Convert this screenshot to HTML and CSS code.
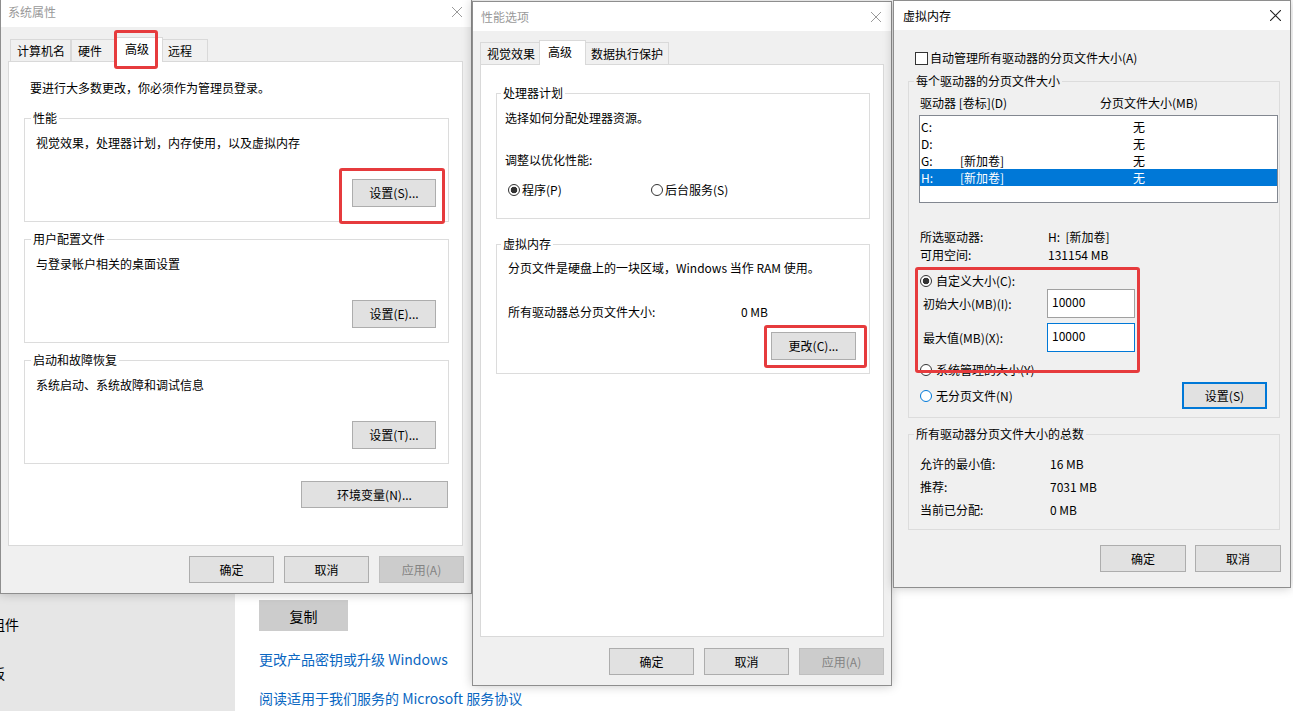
FILE: index.html
```html
<!DOCTYPE html>
<html lang="zh-CN">
<head>
<meta charset="utf-8">
<title>虚拟内存设置</title>
<link rel="stylesheet" href="styles.css">
</head>
<body>
<div class="desktop">
  <aside class="nav">
    <div class="nav-item">组件</div>
    <div class="nav-item">板</div>
  </aside>
  <main class="content">
    <button class="copy-btn">复制</button>
    <a class="link link-a" href="#">更改产品密钥或升级 Windows</a>
    <a class="link link-b" href="#">阅读适用于我们服务的 Microsoft 服务协议</a>
  </main>
</div>

<section class="win win-sys">
  <header class="titlebar">
    <span class="title">系统属性</span>
    <svg class="close" viewBox="0 0 10 10"><path d="M0 0L10 10M10 0L0 10"/></svg>
  </header>
  <div class="win-body">
    <div class="tabs">
      <div class="tab">计算机名</div>
      <div class="tab">硬件</div>
      <div class="tab selected">高级</div>
      <div class="tab">远程</div>
    </div>
    <div class="panel">
      <p class="note">要进行大多数更改，你必须作为管理员登录。</p>
      <fieldset class="group sys-group">
        <legend>性能</legend>
        <p>视觉效果，处理器计划，内存使用，以及虚拟内存</p>
        <div class="actions"><button class="btn btn-set">设置(S)...</button></div>
      </fieldset>
      <fieldset class="group sys-group">
        <legend>用户配置文件</legend>
        <p>与登录帐户相关的桌面设置</p>
        <div class="actions"><button class="btn btn-set">设置(E)...</button></div>
      </fieldset>
      <fieldset class="group sys-group">
        <legend>启动和故障恢复</legend>
        <p>系统启动、系统故障和调试信息</p>
        <div class="actions"><button class="btn btn-set">设置(T)...</button></div>
      </fieldset>
      <div class="actions env-row"><button class="btn btn-env">环境变量(N)...</button></div>
    </div>
    <div class="dialog-buttons">
      <button class="btn">确定</button>
      <button class="btn">取消</button>
      <button class="btn" disabled>应用(A)</button>
    </div>
  </div>
</section>

<section class="win win-perf">
  <header class="titlebar">
    <span class="title">性能选项</span>
    <svg class="close" viewBox="0 0 10 10"><path d="M0 0L10 10M10 0L0 10"/></svg>
  </header>
  <div class="win-body">
    <div class="tabs">
      <div class="tab">视觉效果</div>
      <div class="tab selected">高级</div>
      <div class="tab">数据执行保护</div>
    </div>
    <div class="panel">
      <fieldset class="group perf-g1">
        <legend>处理器计划</legend>
        <p>选择如何分配处理器资源。</p>
        <p class="adjust">调整以优化性能:</p>
        <div class="radio-line">
          <label class="radio-item first"><span class="radio checked"></span>程序(P)</label>
          <label class="radio-item"><span class="radio"></span>后台服务(S)</label>
        </div>
      </fieldset>
      <fieldset class="group perf-g2">
        <legend>虚拟内存</legend>
        <p>分页文件是硬盘上的一块区域，Windows 当作 RAM 使用。</p>
        <div class="kv perf-total"><span class="k">所有驱动器总分页文件大小:</span><span>0 MB</span></div>
        <div class="actions"><button class="btn btn-change">更改(C)...</button></div>
      </fieldset>
    </div>
    <div class="dialog-buttons">
      <button class="btn">确定</button>
      <button class="btn">取消</button>
      <button class="btn" disabled>应用(A)</button>
    </div>
  </div>
</section>

<section class="win win-vm">
  <header class="titlebar">
    <span class="title">虚拟内存</span>
    <svg class="close" viewBox="0 0 10 10"><path d="M0 0L10 10M10 0L0 10"/></svg>
  </header>
  <div class="win-body">
    <label class="check-row"><span class="checkbox"></span>自动管理所有驱动器的分页文件大小(A)</label>
    <fieldset class="group vm-g1">
      <legend>每个驱动器的分页文件大小</legend>
      <div class="cols"><span class="h1">驱动器 [卷标](D)</span><span>分页文件大小(MB)</span></div>
      <div class="drive-list">
        <div class="drive-row"><span class="c1">C:</span><span class="c2"></span><span>无</span></div>
        <div class="drive-row"><span class="c1">D:</span><span class="c2"></span><span>无</span></div>
        <div class="drive-row"><span class="c1">G:</span><span class="c2">[新加卷]</span><span>无</span></div>
        <div class="drive-row selected"><span class="c1">H:</span><span class="c2">[新加卷]</span><span>无</span></div>
      </div>
      <div class="info">
        <div class="kv"><span class="k">所选驱动器:</span><span>H:&nbsp;&nbsp;[新加卷]</span></div>
        <div class="kv"><span class="k">可用空间:</span><span>131154 MB</span></div>
      </div>
      <label class="radio-row custom"><span class="radio checked"></span>自定义大小(C):</label>
      <div class="size-row"><span class="k">初始大小(MB)(I):</span><input class="field" type="text" value="10000"></div>
      <div class="size-row second"><span class="k">最大值(MB)(X):</span><input class="field focused" type="text" value="10000"></div>
      <label class="radio-row managed"><span class="radio"></span>系统管理的大小(Y)</label>
      <div class="last-row">
        <label class="radio-row"><span class="radio hover"></span>无分页文件(N)</label>
        <button class="btn btn-default">设置(S)</button>
      </div>
    </fieldset>
    <fieldset class="group vm-g2">
      <legend>所有驱动器分页文件大小的总数</legend>
      <div class="kv"><span class="k">允许的最小值:</span><span>16 MB</span></div>
      <div class="kv"><span class="k">推荐:</span><span>7031 MB</span></div>
      <div class="kv"><span class="k">当前已分配:</span><span>0 MB</span></div>
    </fieldset>
    <div class="dialog-buttons">
      <button class="btn">确定</button>
      <button class="btn">取消</button>
    </div>
  </div>
</section>

<div class="hl hl-tab"></div>
<div class="hl hl-perf"></div>
<div class="hl hl-change"></div>
<div class="hl hl-custom"></div>
</body>
</html>
```

FILE: styles.css
```css
* { box-sizing: border-box; }
html, body { margin: 0; padding: 0; }
body {
  width: 1293px;
  height: 711px;
  overflow: hidden;
  position: relative;
  background: #fff;
  color: #000;
  font-family: "Noto Sans CJK SC", "Noto Sans", sans-serif;
  font-size: 12px;
  line-height: 16px;
}
p { margin: 0; }
label { display: flex; }

/* background settings page */
.desktop { display: flex; height: 711px; }
.nav {
  width: 235px;
  flex: none;
  background: #e6e6e6;
  padding-top: 614px;
  font-size: 14px;
  line-height: 20px;
}
.nav-item { margin-left: -9px; white-space: nowrap; }
.nav-item + .nav-item { margin-top: 29px; }
.content {
  flex: 1;
  padding: 600px 0 0 24px;
  display: flex;
  flex-direction: column;
  align-items: flex-start;
  font-size: 14px;
  line-height: 20px;
}
.copy-btn {
  width: 89px;
  height: 31px;
  border: 0;
  background: #cccccc;
  font: inherit;
  color: #000;
  padding: 0;
}
.link { color: #0a67c2; text-decoration: none; margin-top: 18px; white-space: nowrap; }
.link-b { margin-top: 19px; }

/* windows */
.win {
  position: absolute;
  display: flex;
  flex-direction: column;
  background: #f0f0f0;
  border: 1px solid #8e8e8e;
  box-shadow: 0 0 10px rgba(0, 0, 0, 0.22);
}
.win-sys { left: 0; top: -4px; width: 472px; height: 598px; }
.win-perf { left: 472px; top: 1px; width: 420px; height: 685px; }
.win-vm { left: 893px; top: 0; width: 398px; height: 588px; z-index: 2; }

.titlebar {
  flex: none;
  height: 29px;
  display: flex;
  align-items: center;
  justify-content: space-between;
  background: #fff;
  padding: 0 10px 0 8px;
}
.win-sys .titlebar { height: 30px; padding: 0 9px 0 7px; }
.win-vm .titlebar { padding: 0 9px 0 9px; }
.title { color: #999; }
.win-vm .title { color: #000; }
.close { width: 10px; height: 10px; stroke: #9a9a9a; stroke-width: 1; fill: none; }
.win-vm .close { stroke: #222; width: 11px; height: 11px; }

.win-body {
  flex: 1;
  min-height: 0;
  display: flex;
  flex-direction: column;
  padding: 0 7px 10px;
}

/* tabs */
.tabs {
  flex: none;
  display: flex;
  align-items: flex-end;
  height: 24px;
  position: relative;
  z-index: 1;
}
.win-sys .tabs { margin: 10px 0 0 2px; }
.win-perf .tabs { margin-top: 9px; }
.tab {
  height: 22px;
  min-width: 47px;
  line-height: 20px;
  padding: 1px 5px 0 6px;
  border: 1px solid #d9d9d9;
  border-bottom: 0;
  background: #f0f0f0;
  white-space: nowrap;
}
.tab.selected {
  height: 25px;
  margin: 0 -2px -1px;
  padding: 1px 7px 0 8px;
  background: #fff;
  position: relative;
  z-index: 1;
}

/* tab panel */
.panel {
  flex: 1;
  display: flex;
  flex-direction: column;
  background: #fff;
  border: 1px solid #d9d9d9;
}
.win-sys .panel { padding: 18px 13px 0 15px; margin-right: 1px; }
.win-perf .panel { padding: 20px 13px 0 15px; }
.note { margin: 0 0 14px 6px; }

/* group boxes */
.group {
  margin: 0;
  min-width: 0;
  border: 1px solid #dcdcdc;
}
.group legend { padding: 0 2px; line-height: 16px; }
.sys-group { padding: 9px 12px 14px 11px; }
.sys-group legend { margin-left: -5px; }
.sys-group + .sys-group { margin-top: 9px; }
.actions { display: flex; justify-content: flex-end; margin-top: 28px; }
.env-row { margin: 17px 1px 0 0; }

.perf-g1 { padding: 9px 13px 20px 8px; }
.perf-g1 legend { margin-left: -4px; }
.adjust { margin-top: 26px; }
.radio-line { display: flex; margin: 14px 0 0 3px; }
.radio-item { align-items: center; gap: 2px; height: 16px; }
.radio-item.first { width: 143px; }
.perf-g2 { margin-top: 17px; padding: 8px 13px 13px 11px; }
.perf-g2 legend { margin-left: -7px; }
.kv { display: flex; white-space: nowrap; }
.perf-total { margin-top: 28px; }
.perf-total .k { width: 233px; }
.perf-g2 .actions { margin-top: 12px; }

/* buttons */
.btn {
  width: 85px;
  height: 27px;
  padding: 0;
  background: #e1e1e1;
  border: 1px solid #adadad;
  font: inherit;
  color: #000;
}
.btn:disabled { background: #cccccc; border-color: #bfbfbf; color: #838383; }
.btn-set { width: 84px; height: 28px; }
.btn-change { height: 28px; }
.btn-env { width: 147px; }
.btn-default { border: 2px solid #0078d7; margin-right: 11px; }

.dialog-buttons {
  flex: none;
  display: flex;
  justify-content: flex-end;
  gap: 10px;
  margin-top: 10px;
}
.win-perf .dialog-buttons { margin-top: 11px; }

/* radio / checkbox / fields */
.radio {
  width: 12px;
  height: 12px;
  flex: none;
  border: 1px solid #333;
  border-radius: 50%;
  background: #fff;
}
.radio.checked { background: radial-gradient(circle, #333 0 3px, #fff 3.6px); }
.radio.hover { border-color: #0078d7; }
.checkbox {
  width: 13px;
  height: 13px;
  flex: none;
  border: 1px solid #333;
  background: #fff;
}

/* virtual memory dialog */
.win-vm .win-body { padding: 0 10px 15px 14px; }
.check-row { align-items: center; gap: 2px; margin: 20px 0 0 7px; height: 16px; }
.vm-g1 { margin-top: 7px; padding: 6px 1px 8px 11px; }
.vm-g1 legend, .vm-g2 legend { margin-left: -6px; }
.cols { display: flex; }
.cols .h1 { width: 180px; }
.drive-list {
  margin: 4px 0 0 -1px;
  height: 88px;
  padding-top: 2px;
  border: 1px solid #828790;
  background: #fff;
}
.drive-row { display: flex; height: 17px; line-height: 17px; }
.drive-row .c1 { width: 40px; padding-left: 1px; }
.drive-row .c2 { width: 173px; }
.drive-row.selected { background: #0078d7; color: #fff; }
.info { margin-top: 25px; line-height: 18px; }
.info .k { width: 128px; }
.radio-row { align-items: center; gap: 4px; height: 16px; white-space: nowrap; }
.radio-row.custom { margin-top: 9px; }
.size-row { display: flex; align-items: center; margin-left: 3px; }
.size-row.second { margin-top: 5px; }
.size-row .k { width: 124px; }
.field {
  width: 88px;
  height: 29px;
  padding: 3px 4px 8px;
  border: 1px solid #a0a0a0;
  background: #fff;
  font: inherit;
  color: #000;
  outline: none;
}
.field.focused { border-color: #0078d7; }
.radio-row.managed { margin-top: 10px; }
.last-row {
  display: flex;
  align-items: center;
  justify-content: space-between;
  margin-top: 4px;
}
.vm-g2 { margin-top: 8px; padding: 10px 1px 8px 11px; }
.vm-g2 .kv { line-height: 23px; }
.vm-g2 .k { width: 130px; }
.win-vm .dialog-buttons { margin: auto -1px 0 0; gap: 9px; }
.win-vm .dialog-buttons .btn { width: 86px; }

/* red highlight marks */
.hl {
  position: absolute;
  z-index: 10;
  border: 3px solid #e63b3d;
  border-radius: 3px;
  pointer-events: none;
}
.hl-tab { left: 114px; top: 30px; width: 44px; height: 39px; }
.hl-perf { left: 339px; top: 168px; width: 106px; height: 56px; }
.hl-change { left: 764px; top: 325px; width: 103px; height: 43px; }
.hl-custom { left: 915px; top: 267px; width: 225px; height: 106px; }
```
